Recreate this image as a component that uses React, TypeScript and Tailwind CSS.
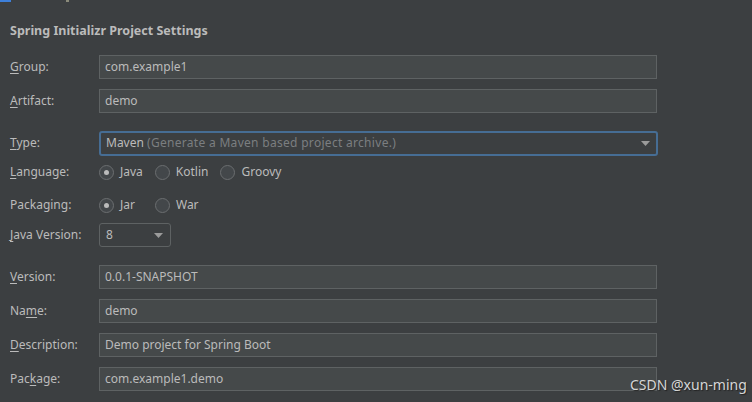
const font = { fontFamily: '"Noto Sans", "Open Sans", "Noto Sans CJK SC", sans-serif' }

function Label({ text, u }: { text: string; u?: number }) {
  return (
    <div className="w-[99px] shrink-0 pl-[10px] text-[12px] text-[#bbbbbb]">
      {u === undefined ? (
        text
      ) : (
        <>
          {text.slice(0, u)}
          <span className="underline underline-offset-2">{text[u]}</span>
          {text.slice(u + 1)}
        </>
      )}
    </div>
  )
}

function Field({ label, u, value, mt }: { label: string; u?: number; value: string; mt: string }) {
  return (
    <div className={`flex h-[24px] items-center ${mt}`}>
      <Label text={label} u={u} />
      <div className="flex h-[24px] w-[558px] items-center border border-[#5e6263] bg-[#45494a] px-[5px] text-[12px] text-[#bbbbbb]">
        {value}
      </div>
    </div>
  )
}

function Arrow() {
  return (
    <svg width="9" height="5" viewBox="0 0 9 5">
      <path d="M0 0h9L4.5 5z" fill="#9b9b9b" />
    </svg>
  )
}

function Radio({ label, checked }: { label: string; checked?: boolean }) {
  return (
    <div className="flex items-center">
      <div className="flex h-[15px] w-[15px] items-center justify-center rounded-full border border-[#6b6e70] bg-[#43474a]">
        {checked && <div className="h-[5px] w-[5px] rounded-full bg-[#bbbbbb]" />}
      </div>
      <span className="ml-[6px] text-[12px] text-[#bbbbbb]">{label}</span>
    </div>
  )
}

export default function App() {
  return (
    <div className="relative h-[402px] w-[752px] overflow-hidden bg-[#3c3f41]" style={font}>
      {/* clipped checkbox row above the section */}
      <div className="absolute left-0 top-0 h-[2px] w-[11px] bg-[#3d7fd9]" />
      <div className="absolute left-[66px] top-0 h-[2px] w-[3px] bg-[#8a8a7a]" />

      <div className="pt-[19px]">
        <div className="flex h-[24px] items-center pl-[10px] text-[12.5px] font-bold text-[#bbbbbb]">
          Spring Initializr Project Settings
        </div>

        <Field label="Group:" u={0} value="com.example1" mt="mt-[12px]" />
        <Field label="Artifact:" u={0} value="demo" mt="mt-[10px]" />

        <div className="mt-[18px] flex h-[24px] items-center">
          <Label text="Type:" u={0} />
          <div className="flex h-[25px] w-[559px] items-center justify-between rounded-[3px] border-2 border-[#466d94] bg-[#3c3f41] pl-[5px] pr-[6px] text-[12px]">
            <span>
              <span className="text-[#bbbbbb]">Maven</span>{" "}
              <span className="tracking-[0.3px] text-[#7b7e80]">(Generate a Maven based project archive.)</span>
            </span>
            <Arrow />
          </div>
        </div>

        <div className="mt-[5px] flex h-[24px] items-center">
          <Label text="Language:" u={0} />
          <div className="flex items-center gap-[12px]">
            <Radio label="Java" checked />
            <Radio label="Kotlin" />
            <Radio label="Groovy" />
          </div>
        </div>

        <div className="mt-[9px] flex h-[24px] items-center">
          <Label text="Packaging:" />
          <div className="flex items-center gap-[20px]">
            <Radio label="Jar" checked />
            <Radio label="War" />
          </div>
        </div>

        <div className="mt-[6px] flex h-[24px] items-center">
          <Label text="Java Version:" u={0} />
          <div className="flex h-[24px] w-[72px] items-center justify-between rounded-[3px] border border-[#5e6263] bg-[#3c3f41] pl-[6px] pr-[7px] text-[12px] text-[#bbbbbb]">
            <span>8</span>
            <Arrow />
          </div>
        </div>

        <Field label="Version:" u={0} value="0.0.1-SNAPSHOT" mt="mt-[18px]" />
        <Field label="Name:" u={2} value="demo" mt="mt-[10px]" />
        <Field label="Description:" u={0} value="Demo project for Spring Boot" mt="mt-[10px]" />
        <Field label="Package:" u={3} value="com.example1.demo" mt="mt-[10px]" />
      </div>

      <div className="absolute left-[630px] top-[374px] text-[14px] text-[#d6d6d6] [text-shadow:1px_1px_1px_#222]">
        CSDN @xun-ming
      </div>
    </div>
  )
}
